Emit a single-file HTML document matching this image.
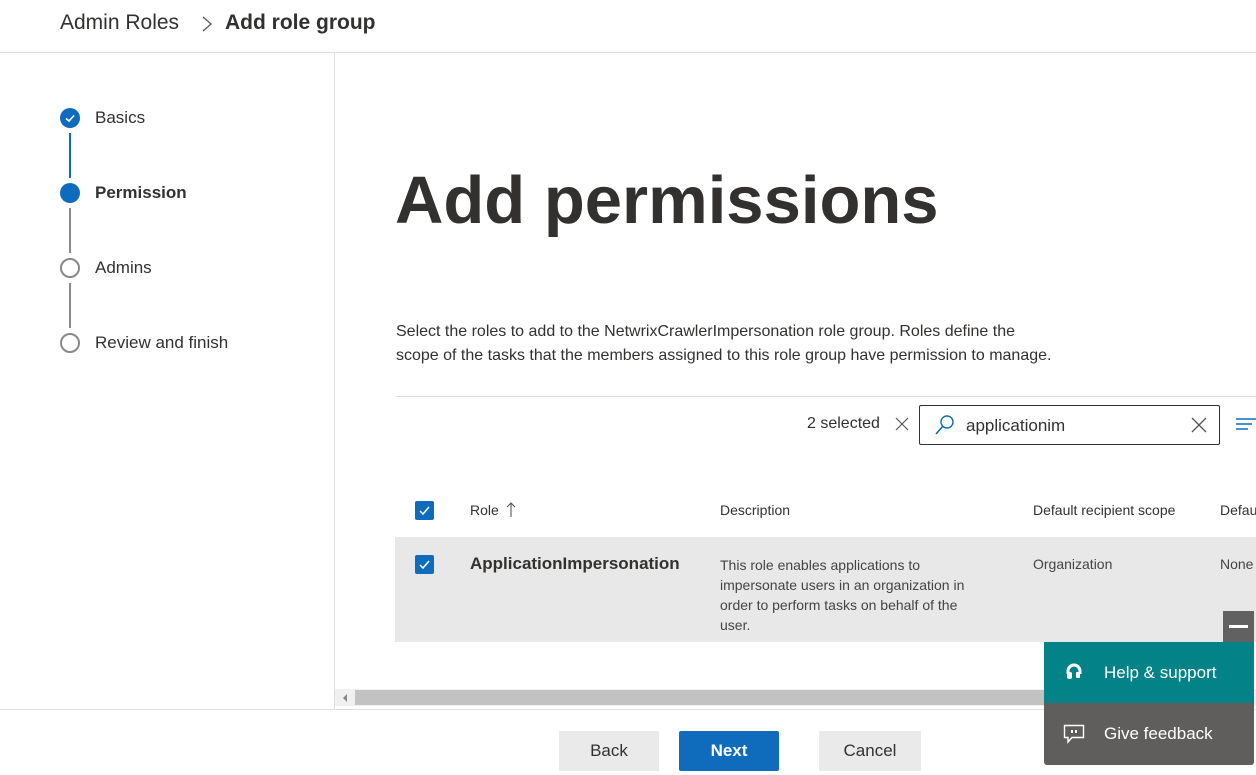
<!DOCTYPE html>
<html><head><meta charset="utf-8"><style>
*{margin:0;padding:0;box-sizing:border-box}
body{width:1256px;height:775px;overflow:hidden;background:#fff;font-family:"Liberation Sans",sans-serif;color:#323130;position:relative}
.a{position:absolute;white-space:nowrap}
</style></head><body>
<div class="a" style="left:60px;top:11px;font-size:21px;color:#323130">Admin Roles</div>
<svg class="a" style="left:200px;top:15px" width="14" height="18"><path d="M3 2 L11 9 L3 16" fill="none" stroke="#555" stroke-width="1.3"/></svg>
<div class="a" style="left:225px;top:11px;font-size:21px;font-weight:bold;color:#323130">Add role group</div>
<div class="a" style="left:0;top:52px;width:1256px;height:1px;background:#e1dfdd"></div>
<div class="a" style="left:334px;top:53px;width:1px;height:656px;background:#e1dfdd"></div>

<div class="a" style="left:69px;top:133px;width:2px;height:45px;background:#0f6cbd"></div>
<div class="a" style="left:69px;top:208px;width:2px;height:45px;background:#8a8886"></div>
<div class="a" style="left:69px;top:283px;width:2px;height:45px;background:#8a8886"></div>
<div class="a" style="left:60px;top:108px;width:20px;height:20px;border-radius:50%;background:#0f6cbd"></div>
<svg class="a" style="left:60px;top:108px" width="20" height="20"><path d="M6 10.5 L9 13 L14 7.5" fill="none" stroke="#fff" stroke-width="1.6"/></svg>
<div class="a" style="left:60px;top:183px;width:20px;height:20px;border-radius:50%;background:#0f6cbd"></div>
<div class="a" style="left:60px;top:258px;width:20px;height:20px;border-radius:50%;border:2px solid #8a8886"></div>
<div class="a" style="left:60px;top:333px;width:20px;height:20px;border-radius:50%;border:2px solid #8a8886"></div>
<div class="a" style="left:95px;top:108px;font-size:17px">Basics</div>
<div class="a" style="left:95px;top:183px;font-size:17px;font-weight:bold">Permission</div>
<div class="a" style="left:95px;top:258px;font-size:17px">Admins</div>
<div class="a" style="left:95px;top:333px;font-size:17px">Review and finish</div>

<div class="a" style="left:395px;top:162px;font-size:67px;font-weight:bold;color:#323130">Add permissions</div>
<div class="a" style="left:396px;top:320px;font-size:16px;line-height:24px;white-space:normal;width:660px">Select the roles to add to the NetwrixCrawlerImpersonation role group. Roles define the scope of the tasks that the members assigned to this role group have permission to manage.</div>
<div class="a" style="left:395px;top:396px;width:861px;height:1px;background:#e1dfdd"></div>

<div class="a" style="left:807px;top:415px;font-size:16px">2 selected</div>
<svg class="a" style="left:894px;top:416px" width="16" height="16"><path d="M2 2L14 14M14 2L2 14" stroke="#555" stroke-width="1.2"/></svg>
<div class="a" style="left:919px;top:405px;width:301px;height:40px;border:1px solid #323130;border-radius:2px"></div>
<svg class="a" style="left:934px;top:414px" width="22" height="22"><circle cx="13" cy="8" r="6" fill="none" stroke="#0f6cbd" stroke-width="1.4"/><path d="M9 12 L2 20" stroke="#0f6cbd" stroke-width="1.6"/></svg>
<div class="a" style="left:966px;top:416px;font-size:17px">applicationim</div>
<svg class="a" style="left:1190px;top:416px" width="18" height="18"><path d="M2 2L16 16M16 2L2 16" stroke="#555" stroke-width="1.3"/></svg>
<svg class="a" style="left:1235px;top:417px" width="21" height="16"><path d="M1 2H21M1 7H17M1 12H13" stroke="#0f6cbd" stroke-width="1.4"/></svg>

<div class="a" style="left:415px;top:501px;width:19px;height:19px;background:#0f6cbd;border-radius:2px"></div>
<svg class="a" style="left:415px;top:501px" width="19" height="19"><path d="M5 10L8 13L14 6" fill="none" stroke="#fff" stroke-width="1.5"/></svg>
<div class="a" style="left:470px;top:502px;font-size:14px">Role</div>
<svg class="a" style="left:505px;top:502px" width="12" height="16"><path d="M6 1V15M2 5L6 1L10 5" fill="none" stroke="#555" stroke-width="1.1"/></svg>
<div class="a" style="left:720px;top:502px;font-size:14px">Description</div>
<div class="a" style="left:1033px;top:502px;font-size:14px">Default recipient scope</div>
<div class="a" style="left:1220px;top:502px;font-size:14px">Defau</div>

<div class="a" style="left:395px;top:537px;width:861px;height:105px;background:#e8e8e8"></div>
<div class="a" style="left:415px;top:555px;width:19px;height:19px;background:#0f6cbd;border-radius:2px"></div>
<svg class="a" style="left:415px;top:555px" width="19" height="19"><path d="M5 10L8 13L14 6" fill="none" stroke="#fff" stroke-width="1.5"/></svg>
<div class="a" style="left:470px;top:554px;font-size:17px;font-weight:bold;color:#323130">ApplicationImpersonation</div>
<div class="a" style="left:720px;top:555px;font-size:14px;line-height:20px;white-space:normal;width:262px;color:#444">This role enables applications to impersonate users in an organization in order to perform tasks on behalf of the user.</div>
<div class="a" style="left:1033px;top:556px;font-size:14px;color:#444">Organization</div>
<div class="a" style="left:1220px;top:556px;font-size:14px;color:#444">None</div>

<div class="a" style="left:335px;top:689px;width:921px;height:17px;background:#f0f0f0"></div>
<div class="a" style="left:355px;top:690px;width:700px;height:15px;background:#c2c2c2"></div>
<svg class="a" style="left:341px;top:693px" width="8" height="10"><path d="M6 1L2 5L6 9Z" fill="#888"/></svg>
<div class="a" style="left:0;top:709px;width:1256px;height:1px;background:#e1dfdd"></div>

<div class="a" style="left:559px;top:731px;width:100px;height:40px;background:#eaeaea;font-size:17px;text-align:center;line-height:40px">Back</div>
<div class="a" style="left:679px;top:731px;width:100px;height:40px;background:#0f6cbd;color:#fff;font-weight:bold;font-size:17px;text-align:center;line-height:40px;border-radius:2px">Next</div>
<div class="a" style="left:819px;top:731px;width:102px;height:40px;background:#eaeaea;font-size:17px;text-align:center;line-height:40px">Cancel</div>

<div class="a" style="left:1223px;top:611px;width:31px;height:31px;background:#616161"></div>
<div class="a" style="left:1229px;top:625px;width:19px;height:3px;background:#fff"></div>
<div class="a" style="left:1044px;top:642px;width:210px;height:61px;background:#038387"></div>
<svg class="a" style="left:1064px;top:662px" width="20" height="20"><path d="M4 12V9a6 6 0 0 1 12 0v3" fill="none" stroke="#fff" stroke-width="3"/><rect x="3" y="10" width="5" height="7" rx="2" fill="#fff"/><rect x="12" y="10" width="4" height="6" rx="1" fill="#fff"/></svg>
<div class="a" style="left:1104px;top:663px;font-size:17px;color:#fff">Help &amp; support</div>
<div class="a" style="left:1044px;top:703px;width:210px;height:62px;background:#605e5c;border-radius:0 0 3px 3px"></div>
<svg class="a" style="left:1063px;top:724px" width="22" height="20"><path d="M1.5 1.5H20.5V13.5H9L5 18V13.5H1.5Z" fill="none" stroke="#fff" stroke-width="1.4"/><rect x="8" y="6" width="2" height="3" fill="#fff"/><rect x="12" y="6" width="2" height="3" fill="#fff"/></svg>
<div class="a" style="left:1104px;top:724px;font-size:17px;color:#fff">Give feedback</div>
</body></html>
